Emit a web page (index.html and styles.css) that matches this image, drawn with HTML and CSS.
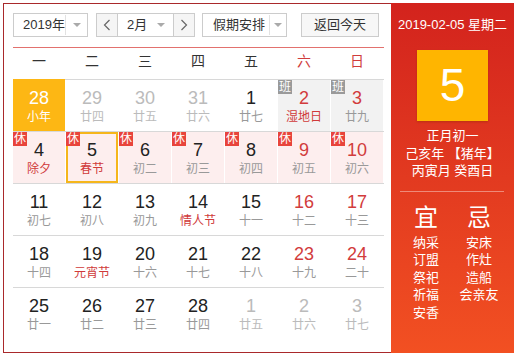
FILE: index.html
```html
<!DOCTYPE html>
<html lang="zh-CN">
<head>
<meta charset="utf-8">
<title>万年历</title>
<link rel="stylesheet" href="styles.css">
</head>
<body>
<div class="cal">
  <div class="main">
    <div class="toolbar">
      <div class="sel year"><span class="sel-text">2019年</span><span class="sel-arrow"><i class="tri"></i></span></div>
      <div class="month-group">
        <span class="nav"><svg width="8" height="12" viewBox="0 0 8 12"><polyline points="6.5,1 1.5,6 6.5,11" fill="none" stroke="#666" stroke-width="1.2"/></svg></span>
        <span class="month"><span class="sel-text">2月</span><i class="tri"></i></span>
        <span class="nav next"><svg width="8" height="12" viewBox="0 0 8 12"><polyline points="1.5,1 6.5,6 1.5,11" fill="none" stroke="#666" stroke-width="1.2"/></svg></span>
      </div>
      <div class="sel holiday"><span class="sel-text">假期安排</span><span class="sel-arrow"><i class="tri"></i></span></div>
      <div class="today-btn">返回今天</div>
    </div>
    <div class="weekdays">
      <span>一</span><span>二</span><span>三</span><span>四</span><span>五</span><span class="wk">六</span><span class="wk">日</span>
    </div>
    <div class="weeks">
      <div class="week">
        <div class="day sel-day"><div class="num">28</div><div class="lunar">小年</div></div>
        <div class="day other"><div class="num">29</div><div class="lunar">廿四</div></div>
        <div class="day other"><div class="num">30</div><div class="lunar">廿五</div></div>
        <div class="day other"><div class="num">31</div><div class="lunar">廿六</div></div>
        <div class="day"><div class="num">1</div><div class="lunar">廿七</div></div>
        <div class="day work weekend"><span class="badge ban">班</span><div class="num">2</div><div class="lunar fest">湿地日</div></div>
        <div class="day work weekend"><span class="badge ban">班</span><div class="num">3</div><div class="lunar">廿九</div></div>
      </div>
      <div class="week">
        <div class="day rest"><span class="badge">休</span><div class="num">4</div><div class="lunar fest">除夕</div></div>
        <div class="day rest today"><span class="badge">休</span><div class="num">5</div><div class="lunar fest">春节</div></div>
        <div class="day rest"><span class="badge">休</span><div class="num">6</div><div class="lunar">初二</div></div>
        <div class="day rest"><span class="badge">休</span><div class="num">7</div><div class="lunar">初三</div></div>
        <div class="day rest"><span class="badge">休</span><div class="num">8</div><div class="lunar">初四</div></div>
        <div class="day rest weekend"><span class="badge">休</span><div class="num">9</div><div class="lunar">初五</div></div>
        <div class="day rest weekend"><span class="badge">休</span><div class="num">10</div><div class="lunar">初六</div></div>
      </div>
      <div class="week">
        <div class="day"><div class="num">11</div><div class="lunar">初七</div></div>
        <div class="day"><div class="num">12</div><div class="lunar">初八</div></div>
        <div class="day"><div class="num">13</div><div class="lunar">初九</div></div>
        <div class="day"><div class="num">14</div><div class="lunar fest">情人节</div></div>
        <div class="day"><div class="num">15</div><div class="lunar">十一</div></div>
        <div class="day weekend"><div class="num">16</div><div class="lunar">十二</div></div>
        <div class="day weekend"><div class="num">17</div><div class="lunar">十三</div></div>
      </div>
      <div class="week">
        <div class="day"><div class="num">18</div><div class="lunar">十四</div></div>
        <div class="day"><div class="num">19</div><div class="lunar fest">元宵节</div></div>
        <div class="day"><div class="num">20</div><div class="lunar">十六</div></div>
        <div class="day"><div class="num">21</div><div class="lunar">十七</div></div>
        <div class="day"><div class="num">22</div><div class="lunar">十八</div></div>
        <div class="day weekend"><div class="num">23</div><div class="lunar">十九</div></div>
        <div class="day weekend"><div class="num">24</div><div class="lunar">二十</div></div>
      </div>
      <div class="week">
        <div class="day"><div class="num">25</div><div class="lunar">廿一</div></div>
        <div class="day"><div class="num">26</div><div class="lunar">廿二</div></div>
        <div class="day"><div class="num">27</div><div class="lunar">廿三</div></div>
        <div class="day"><div class="num">28</div><div class="lunar">廿四</div></div>
        <div class="day other"><div class="num">1</div><div class="lunar">廿五</div></div>
        <div class="day other"><div class="num">2</div><div class="lunar">廿六</div></div>
        <div class="day other"><div class="num">3</div><div class="lunar">廿七</div></div>
      </div>
    </div>
  </div>
  <aside class="side">
    <div class="side-date">2019-02-05 星期二</div>
    <div class="big-day">5</div>
    <div class="lunar-info">
      <div>正月初一</div>
      <div>己亥年 【猪年】</div>
      <div>丙寅月 癸酉日</div>
    </div>
    <div class="sep"></div>
    <div class="yiji">
      <div class="yj-col">
        <div class="yj-title">宜</div>
        <div class="yj-list"><div>纳采</div><div>订盟</div><div>祭祀</div><div>祈福</div><div>安香</div></div>
      </div>
      <div class="yj-col">
        <div class="yj-title">忌</div>
        <div class="yj-list"><div>安床</div><div>作灶</div><div>造船</div><div>会亲友</div></div>
      </div>
    </div>
  </aside>
</div>
</body>
</html>
```

FILE: styles.css
```css
* { box-sizing: border-box; margin: 0; padding: 0; }
body {
  margin: 0;
  background: #fff;
  font-family: "Liberation Sans", "Noto Sans CJK SC", sans-serif;
  color: #333;
}
.cal {
  display: flex;
  margin: 3px 0 0 3px;
  width: 511px;
  height: 350px;
}
.main {
  width: 388px;
  border: 1px solid #a9292b;
  border-right: none;
  padding: 9px 0 0 9px;
}
.toolbar {
  display: flex;
  height: 24px;
  margin-bottom: 10px;
  font-size: 13px;
  white-space: nowrap;
}
.sel {
  display: flex;
  border: 1px solid #ccc;
  background: #fff;
}
.sel-text {
  flex: 1;
  line-height: 22px;
  padding-left: 10px;
  color: #333;
  white-space: nowrap;
}
.sel-arrow {
  display: flex;
  align-items: center;
  justify-content: center;
  border-left: 1px solid #e2e2e2;
  margin: 1px 0;
  flex: none;
}
.tri {
  display: block;
  width: 0;
  height: 0;
  border-left: 4px solid transparent;
  border-right: 4px solid transparent;
  border-top: 4px solid #aaa;
}
.year { width: 75px; }
.year .sel-text { padding-left: 9px; }
.year .sel-arrow { width: 22px; }
.month-group {
  display: flex;
  margin-left: 8px;
  width: 99px;
  border: 1px solid #ccc;
}
.nav {
  width: 21px;
  background: #f5f5f5;
  display: flex;
  align-items: center;
  justify-content: center;
  border-right: 1px solid #ccc;
}
.nav.next {
  border-right: none;
  border-left: 1px solid #ccc;
}
.month {
  flex: 1;
  display: flex;
  align-items: center;
  padding-right: 8px;
}
.month .sel-text { padding-left: 9px; }
.holiday { width: 85px; margin-left: 7px; }
.holiday .sel-text { padding-left: 10px; }
.holiday .sel-arrow { width: 17px; }
.today-btn {
  margin-left: 14px;
  width: 78px;
  border: 1px solid #ccc;
  background: #f7f7f7;
  text-align: center;
  line-height: 22px;
  color: #333;
}
.weekdays {
  display: grid;
  grid-template-columns: repeat(7, 52px);
  column-gap: 1px;
  width: 371px;
  height: 32px;
  border-top: 1px solid #e2716e;
  font-size: 14px;
  line-height: 27px;
  text-align: center;
  color: #333;
}
.weekdays .wk { color: #d03c3c; }
.week {
  display: grid;
  grid-template-columns: repeat(7, 52px);
  column-gap: 1px;
  width: 371px;
  height: 52px;
  border-top: 1px solid #d8d8d8;
}
.day {
  position: relative;
  text-align: center;
  padding-top: 8px;
  height: 51px;
}
.num {
  font-size: 18px;
  line-height: 20px;
  color: #222;
}
.lunar {
  font-size: 12px;
  line-height: 18px;
  color: #999;
}
.lunar.fest { color: #d03a3a; }
.weekend .num { color: #d23c3c; }
.other .num, .other .lunar { color: #bbb; }
.sel-day { background: #fdb714; margin-top: -1px; height: 52px; padding-top: 9px; }
.sel-day .num, .sel-day .lunar { color: #fff; }
.work { background: #f2f2f2; }
.rest { background: #fdeeee; }
.today {
  border: 2px solid #f5b61b;
  padding-top: 6px;
}
.badge {
  position: absolute;
  top: 0;
  left: 0;
  width: 14px;
  height: 14px;
  background: #e8443b;
  color: #fff;
  font-size: 12px;
  line-height: 14px;
  text-align: center;
}
.today .badge { top: -2px; left: -2px; }
.badge.ban { background: #9a9a9a; }
.side {
  width: 123px;
  height: 350px;
  background: linear-gradient(180deg, #d3231d 0%, #e23a20 50%, #f25022 100%);
  color: #fff;
  text-align: center;
  padding-top: 13px;
}
.side-date {
  font-size: 13px;
  line-height: 18px;
}
.big-day {
  width: 71px;
  height: 71px;
  margin: 16px auto 0;
  background: #ffb500;
  font-size: 46px;
  line-height: 71px;
  color: #fff;
  box-shadow: 0 1px 2px rgba(120, 40, 0, 0.35);
}
.lunar-info {
  margin-top: 6px;
  font-size: 13px;
  line-height: 17.5px;
}
.sep {
  margin: 11px 10px 0 9px;
  height: 1px;
  background: rgba(255, 255, 255, 0.4);
}
.yiji {
  display: flex;
  justify-content: center;
}
.yj-col { width: 53px; }
.yj-title {
  margin-top: 12px;
  font-size: 24px;
  line-height: 28px;
}
.yj-list {
  margin-top: 2px;
  font-size: 13px;
  line-height: 17.5px;
}
```
